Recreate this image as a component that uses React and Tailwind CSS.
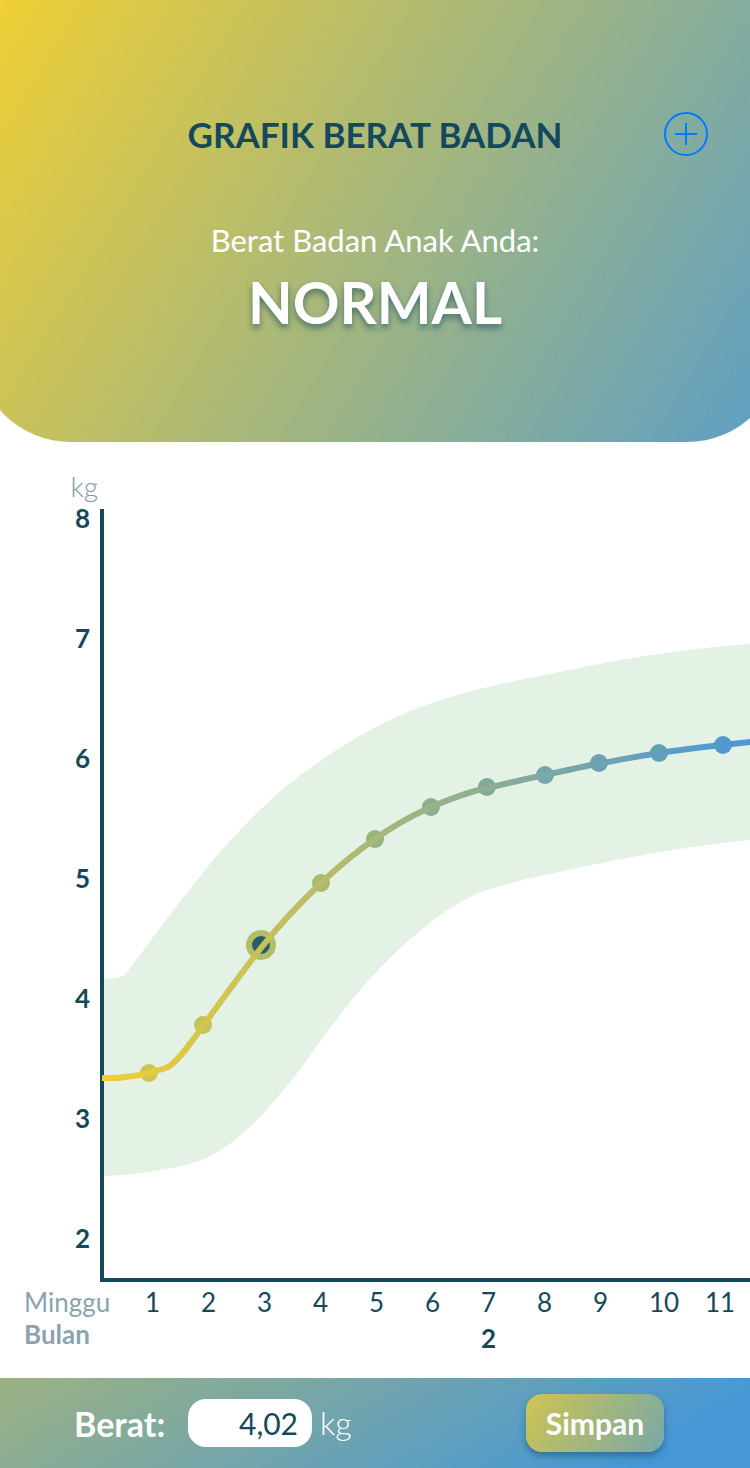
import React from "react";

const kilograms = [8, 7, 6, 5, 4, 3, 2];
const weeks = [1, 2, 3, 4, 5, 6, 7, 8, 9, 10, 11];

const points = [
  { x: 49, y: 564, color: "#cdc651" },
  { x: 103, y: 516, color: "#c3c45a" },
  { x: 221, y: 374, color: "#a8bb6c" },
  { x: 275, y: 330, color: "#96b47f" },
  { x: 331, y: 298, color: "#88af90" },
  { x: 387, y: 278, color: "#80a99c" },
  { x: 445, y: 266, color: "#74a5ac" },
  { x: 499, y: 254, color: "#6aa1b6" },
  { x: 559, y: 244, color: "#62a3b3" },
  { x: 623, y: 236, color: "#529ad0" },
];

function Header() {
  return (
    <div className="overflow-hidden">
      <header className="-mr-8 -ml-6 flex h-[442px] flex-col rounded-b-[95px] bg-[linear-gradient(121deg,#f2d031,#5b9ec7)] pt-28 pr-8 pl-6 text-center">
        <div className="grid grid-cols-[1fr_auto_1fr] items-center px-[42px]">
          <h1 className="col-start-2 text-[35px] leading-[42px] font-bold whitespace-nowrap text-[#14495d]">
            GRAFIK BERAT BADAN
          </h1>
          <button type="button" aria-label="Tambah" className="size-11 justify-self-end text-[#007aff]">
            <svg viewBox="0 0 44 44" className="size-11" fill="none" stroke="currentColor" strokeWidth="2">
              <circle cx="22" cy="22" r="21" />
              <path d="M22 11v22M11 22h22" />
            </svg>
          </button>
        </div>
        <p className="mt-16 text-[31px] leading-10 font-normal text-white">Berat Badan Anak Anda:</p>
        <p className="mt-2 text-[58px] leading-[68px] font-bold text-white [text-shadow:0_4px_6px_rgba(20,73,93,0.6)]">
          NORMAL
        </p>
      </header>
    </div>
  );
}

function GrowthChart() {
  return (
    <svg className="mt-[7px] h-[773px] min-w-0 flex-1" role="img" aria-label="Grafik berat badan">
      <defs>
        <linearGradient id="curve" gradientUnits="userSpaceOnUse" x1="0" y1="400" x2="623" y2="400">
          <stop offset="0" stopColor="#f1cf32" />
          <stop offset="1" stopColor="#4f99d2" />
        </linearGradient>
      </defs>
      <path
        fill="#e4f2e5"
        d="M3 470 Q14 469.500 24 467 C40 447 56 423 73 402 C112 350 155 300 200 266.500 C240 236 292 205 350 188 C383 179 417 171 450 165 C517 150 583 140 650 134.700 L1000 115 V305 L650 331 C590 337 530 347 450 365 C425 370 405 375 387 381 C364 389 343 403 325 418 C311 429 300 439 288 451 C270 469 255 486 240 506 C218 534 200 563 177 589 C155 615 128 641 100 652 C75 660 35 666 3 667 Z"
      />
      <path d="M2 0 V771 H2000" fill="none" stroke="#14495d" strokeWidth="4" />
      {points.map((p) => (
        <circle key={p.x} cx={p.x} cy={p.y} r="9" fill={p.color} />
      ))}
      <circle cx="161" cy="436" r="12" fill="#2a5c69" stroke="#b1bd69" strokeWidth="6" />
      <path
        fill="none"
        stroke="url(#curve)"
        strokeWidth="6"
        d="M2 569 C25 570 50 565 68 558 C78 553 92 532 103 517 C122 491 142 463 161 439 C180 415 200 394 221 374 C238 358 256 343 275 330 C293 317 311 307 331 298 C350 290 368 283 387 279 C405 275 425 270 445 266 C463 262 481 258 499 254.500 C519 251 539 247 559 244 C580 241 601 238 623 236 L650 233 L1000 205"
      />
    </svg>
  );
}

function Chart() {
  return (
    <main className="overflow-hidden pt-7 pb-6 text-[26px] leading-8 text-[#14495d]">
      <p className="w-[98px] text-right text-[28px] leading-8 font-light text-[#7f9aa8]">kg</p>
      <div className="flex">
        <ol className="flex h-[752px] w-[100px] flex-col justify-between pr-2.5 text-right font-bold">
          {kilograms.map((kg) => (
            <li key={kg}>{kg}</li>
          ))}
        </ol>
        <GrowthChart />
      </div>
      <div className="mt-1 flex">
        <span className="w-[145px] shrink-0 pl-6 font-normal text-[#8ba3af]">Minggu</span>
        <div className="grid grid-cols-[repeat(11,56px)] font-normal">
          {weeks.map((week) => (
            <span key={week}>{week}</span>
          ))}
        </div>
      </div>
      <div className="flex h-9">
        <span className="w-[145px] shrink-0 pl-6 font-bold text-[#8ba3af]">Bulan</span>
        <div className="grid grid-cols-[repeat(11,56px)] items-end font-bold">
          <span className="col-start-7">2</span>
        </div>
      </div>
    </main>
  );
}

function WeightForm() {
  return (
    <form
      onSubmit={(event) => event.preventDefault()}
      className="flex h-[90px] items-center bg-[linear-gradient(150deg,#9db282,#4597d8_88%)] pr-[86px] pl-[74px] text-white"
    >
      <label htmlFor="weight" className="w-[114px] text-[34px] font-bold">
        Berat:
      </label>
      <input
        id="weight"
        type="text"
        inputMode="decimal"
        defaultValue="4,02"
        className="h-12 w-[124px] rounded-[18px] bg-white pr-3.5 text-right text-[30px] font-normal text-[#14495d] outline-none"
      />
      <span className="ml-2 text-[32px] font-light">kg</span>
      <button
        type="submit"
        className="ml-auto h-[58px] w-[138px] rounded-2xl bg-[linear-gradient(121deg,#cfc452,#78a8a8)] text-[30px] font-bold shadow-[0_4px_6px_rgba(20,73,93,0.5)]"
      >
        Simpan
      </button>
    </form>
  );
}

export default function App() {
  return (
    <div className="min-h-screen bg-white font-['Lato',sans-serif]">
      <Header />
      <Chart />
      <WeightForm />
    </div>
  );
}
